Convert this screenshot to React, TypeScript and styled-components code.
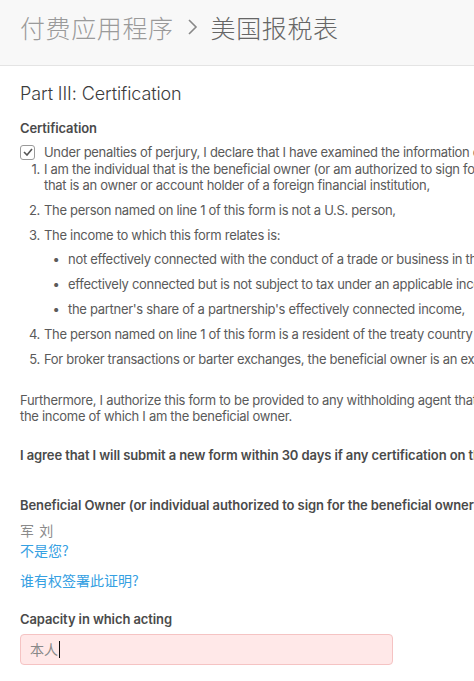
import React from "react";
import styled, { createGlobalStyle } from "styled-components";

const Global = createGlobalStyle`
  html, body { margin: 0; padding: 0; background: #fff; }
  body { overflow: hidden; font-family: Inter, "Noto Sans CJK SC", sans-serif; }
`;

const Page = styled.div`
  width: 474px;
  height: 681px;
  overflow: hidden;
  background: #fff;
`;

const Header = styled.header`
  height: 66px;
  box-sizing: border-box;
  background: #f8f8f8;
  border-bottom: 1px solid #e4e4e4;
  display: flex;
  align-items: center;
  padding: 0 20px 11px;
  gap: 13px;
  font-family: "Noto Sans CJK SC", sans-serif;
  font-size: 25px;
  font-weight: 300;
`;

const Crumb = styled.span<{ $current?: boolean }>`
  color: ${(p) => (p.$current ? "#666" : "#9a9a9a")};
  letter-spacing: 0.6px;
`;

const Chevron = styled.svg`
  width: 11px;
  height: 18px;
`;

const Main = styled.main`
  width: 900px;
  padding: 16px 20px 0;
  color: #5a5a5a;
  font-size: 13px;
  line-height: 16px;
  letter-spacing: -0.3px;
`;

const Title = styled.h1`
  margin: 0;
  font-size: 18px;
  line-height: 24px;
  font-weight: 300;
  color: #3c3c3c;
  letter-spacing: -0.1px;
`;

const Label = styled.div<{ $mt: number }>`
  margin-top: ${(p) => p.$mt}px;
  font-weight: 600;
  color: #4a4a4a;
  letter-spacing: -0.1px;
  white-space: nowrap;
`;

const CheckRow = styled.div`
  margin-top: 8px;
  display: flex;
  align-items: center;
  gap: 9px;
  white-space: nowrap;
`;

const Box = styled.span`
  flex: none;
  width: 15px;
  height: 15px;
  box-sizing: border-box;
  border: 1px solid #9a9a9a;
  border-radius: 3px;
  display: inline-flex;
  align-items: center;
  justify-content: center;
  background: #fff;
`;

const List = styled.div`
  margin-top: 1px;
  display: flex;
  flex-direction: column;
  gap: 8.8px;
`;

const Item = styled.div`
  display: flex;
  white-space: nowrap;
`;

const Marker = styled.span<{ $bullet?: boolean }>`
  flex: none;
  width: 24px;
  box-sizing: border-box;
  text-align: ${(p) => (p.$bullet ? "center" : "right")};
  padding-right: ${(p) => (p.$bullet ? "0" : "4px")};
`;

const Body = styled.div`
  display: flex;
  flex-direction: column;
  gap: 8.8px;
`;

const Para = styled.p<{ $mt: number }>`
  margin: ${(p) => p.$mt}px 0 0;
  white-space: nowrap;
`;

const Name = styled.div`
  margin-top: 8px;
  font-family: "Noto Sans CJK SC", sans-serif;
  font-size: 14px;
  line-height: 18px;
  color: #8a8a8a;
  letter-spacing: 1px;
`;

const Link = styled.a<{ $mt: number }>`
  display: block;
  margin-top: ${(p) => p.$mt}px;
  font-family: "Noto Sans CJK SC", sans-serif;
  font-size: 14px;
  line-height: 18px;
  color: #35a0e2;
  letter-spacing: 0;
  text-decoration: none;
`;

const Field = styled.div`
  margin-top: 7px;
  width: 373px;
  height: 31px;
  box-sizing: border-box;
  background: #ffe8e8;
  border: 1px solid #f5c3c3;
  border-radius: 4px;
  display: flex;
  align-items: center;
  padding-left: 9px;
  font-family: "Noto Sans CJK SC", sans-serif;
  font-size: 14px;
  letter-spacing: 0;
  color: #888;
`;

const Caret = styled.span`
  display: inline-block;
  width: 1px;
  height: 17px;
  background: #111;
  margin-left: 1px;
`;

export default function App() {
  return (
    <Page>
      <Global />
      <Header>
        <Crumb>付费应用程序</Crumb>
        <Chevron viewBox="0 0 11 18">
          <path d="M2 2 L9 9 L2 16" fill="none" stroke="#888" strokeWidth="1.6" />
        </Chevron>
        <Crumb $current>美国报税表</Crumb>
      </Header>
      <Main>
        <Title>Part III: Certification</Title>
        <Label $mt={14}>Certification</Label>
        <CheckRow>
          <Box>
            <svg width="10" height="8" viewBox="0 0 10 8">
              <path d="M1 4 L4 7 L9 1" fill="none" stroke="#555" strokeWidth="1.6" />
            </svg>
          </Box>
          <span>Under penalties of perjury, I declare that I have examined the information on this form and to the best of my knowledge and belief it is true, correct, and complete. I further certify under penalties of perjury that:</span>
        </CheckRow>
        <List>
          <Item>
            <Marker>1.</Marker>
            <span>
              I am the individual that is the beneficial owner (or am authorized to sign for the individual that is the beneficial owner) of all the income to which this form relates or am using this form to document myself as an individual
              <br />
              that is an owner or account holder of a foreign financial institution,
            </span>
          </Item>
          <Item>
            <Marker>2.</Marker>
            <span>The person named on line 1 of this form is not a U.S. person,</span>
          </Item>
          <Item>
            <Marker>3.</Marker>
            <Body>
              <span>The income to which this form relates is:</span>
              <Item>
                <Marker $bullet>•</Marker>
                <span>not effectively connected with the conduct of a trade or business in the United States,</span>
              </Item>
              <Item>
                <Marker $bullet>•</Marker>
                <span>effectively connected but is not subject to tax under an applicable income tax treaty, or</span>
              </Item>
              <Item>
                <Marker $bullet>•</Marker>
                <span>the partner's share of a partnership's effectively connected income,</span>
              </Item>
            </Body>
          </Item>
          <Item>
            <Marker>4.</Marker>
            <span>The person named on line 1 of this form is a resident of the treaty country listed on line 9 of the form (if any) within the meaning of the income tax treaty between the United States and that country, and</span>
          </Item>
          <Item>
            <Marker>5.</Marker>
            <span>For broker transactions or barter exchanges, the beneficial owner is an exempt foreign person as defined in the instructions.</span>
          </Item>
        </List>
        <Para $mt={25}>
          Furthermore, I authorize this form to be provided to any withholding agent that has control, receipt, or custody of the income of which I am the beneficial owner or any withholding agent that can disburse or make payments of
          <br />
          the income of which I am the beneficial owner.
        </Para>
        <Label $mt={23}>I agree that I will submit a new form within 30 days if any certification on this form becomes incorrect.</Label>
        <Label $mt={34}>Beneficial Owner (or individual authorized to sign for the beneficial owner)</Label>
        <Name>军 刘</Name>
        <Link $mt={2} href="#">不是您?</Link>
        <Link $mt={12} href="#">谁有权签署此证明?</Link>
        <Label $mt={22}>Capacity in which acting</Label>
        <Field>
          本人
          <Caret />
        </Field>
      </Main>
    </Page>
  );
}
